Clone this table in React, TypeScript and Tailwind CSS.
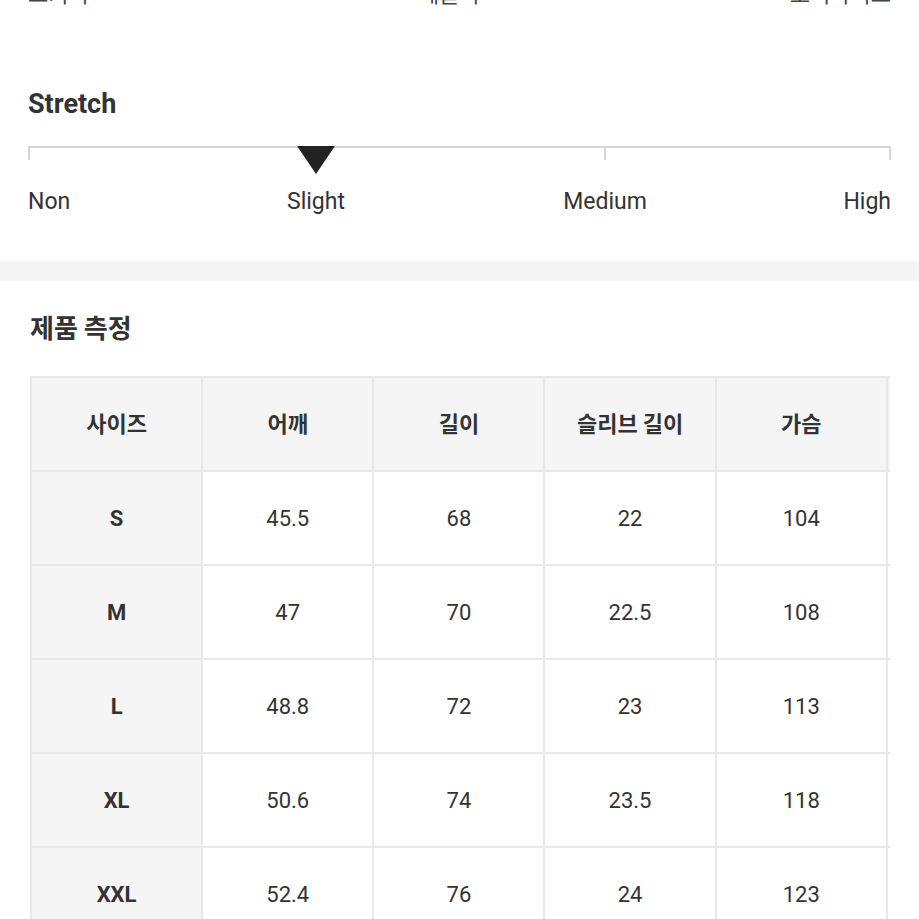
const sizes = [
  { size: "S", shoulder: "45.5", length: "68", sleeve: "22", chest: "104" },
  { size: "M", shoulder: "47", length: "70", sleeve: "22.5", chest: "108" },
  { size: "L", shoulder: "48.8", length: "72", sleeve: "23", chest: "113" },
  { size: "XL", shoulder: "50.6", length: "74", sleeve: "23.5", chest: "118" },
  { size: "XXL", shoulder: "52.4", length: "76", sleeve: "24", chest: "123" },
];

const headers = ["사이즈", "어깨", "길이", "슬리브 길이", "가슴", "총장"];

export default function App() {
  return (
    <div
      className="w-[919px] h-[919px] overflow-hidden bg-white text-[#333]"
      style={{ fontFamily: "Roboto, 'Noto Sans CJK KR', sans-serif" }}
    >
      {/* cut-off fit labels from the section above */}
      <div className="h-[10px] overflow-hidden px-[28px]">
        <div className="-mt-[19px] flex justify-between text-[22px] leading-[28px] text-[#444]">
          <span>스키니</span>
          <span className="pl-[20px]">레귤러</span>
          <span>오버사이즈</span>
        </div>
      </div>

      <section className="px-[28px] pt-[78px]">
        <h3 className="text-[27px] font-bold leading-[32px]">Stretch</h3>

        <div className="relative mt-[24px] h-[30px]">
          <div className="absolute left-0 right-0 top-[2px] h-[2px] bg-[#d6d6d6]" />
          <div className="absolute left-0 top-[2px] h-[14px] w-[2px] bg-[#d6d6d6]" />
          <div className="absolute left-[576px] top-[2px] h-[14px] w-[2px] bg-[#d6d6d6]" />
          <div className="absolute right-0 top-[2px] h-[14px] w-[2px] bg-[#d6d6d6]" />
          <svg className="absolute left-[269px] top-[2px]" width="38" height="28" viewBox="0 0 38 28">
            <polygon points="0,0 38,0 19,28" fill="#222" />
          </svg>
        </div>

        <div className="relative mt-[13px] h-[30px] text-[23px] leading-[30px]">
          <span className="absolute left-0">Non</span>
          <span className="absolute left-[288px] -translate-x-1/2">Slight</span>
          <span className="absolute left-[577px] -translate-x-1/2">Medium</span>
          <span className="absolute right-0">High</span>
        </div>
      </section>

      <div className="mt-[44px] h-[20px] bg-[#f4f4f4]" />

      <section className="pl-[30px] pt-[30px]">
        <h3 className="text-[26px] font-bold leading-[32px]" style={{ fontFamily: "'Noto Sans CJK KR', sans-serif" }}>
          제품 측정
        </h3>

        <div className="mt-[33px] w-[860px] overflow-hidden">
          <table className="w-[1029px] table-fixed border-collapse text-center text-[22px]">
            <thead>
              <tr className="h-[94px] bg-[#f5f5f5]">
                {headers.map((h) => (
                  <th
                    key={h}
                    className="border-2 border-[#e8e8e8] pb-[4px] font-bold"
                    style={{ fontFamily: "'Noto Sans CJK KR', sans-serif" }}
                  >
                    {h}
                  </th>
                ))}
              </tr>
            </thead>
            <tbody>
              {sizes.map((r) => (
                <tr key={r.size} className="h-[94px]">
                  <td className="border-2 border-[#e8e8e8] bg-[#f5f5f5] font-bold">{r.size}</td>
                  <td className="border-2 border-[#e8e8e8]">{r.shoulder}</td>
                  <td className="border-2 border-[#e8e8e8]">{r.length}</td>
                  <td className="border-2 border-[#e8e8e8]">{r.sleeve}</td>
                  <td className="border-2 border-[#e8e8e8]">{r.chest}</td>
                  <td className="border-2 border-[#e8e8e8]"></td>
                </tr>
              ))}
            </tbody>
          </table>
        </div>
      </section>
    </div>
  );
}
